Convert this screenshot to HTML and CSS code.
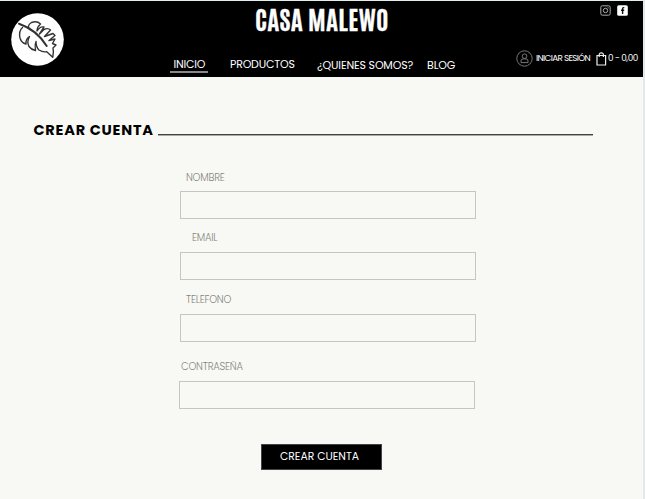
FILE: index.html
```
<!DOCTYPE html>
<html lang="es">
<head>
<meta charset="utf-8">
<title>Casa Malewo</title>
<link rel="stylesheet" href="styles.css">
</head>
<body>
<div class="page">
  <header class="header">
    <a class="logo">
      <svg width="53" height="53" viewBox="0 0 53 53" fill="none" stroke="#333" stroke-width="1.4" stroke-linejoin="round" stroke-linecap="round">
        <circle cx="26.5" cy="26.5" r="26.3" fill="#fff" stroke="none"/>
        <path d="M8 10.700Q26 17 35.700 33" stroke-width="2"/>
        <path d="M11.500 14.500Q7.500 18 9 25Q10.500 30 15 31Q14.500 26 18.500 23.500Q15.500 29 18 33.500Q20 36.500 24.500 37.500Q23.500 32 25 28.500Q25 34 28 37Q32 39.500 35.700 38.700L41.700 44.300Q43 39 42 35L45 32L41.500 30.500L44 26L38 27.500L44 22.500L42 20.500L33.500 23.500L39.500 17Q37 14.500 33 16.500L28.500 21L33 14Q29 13 26 18Q26 14 29.500 11Q26 7.500 20.500 9.500Q17 11.500 17.500 15"/>
      </svg>
    </a>
    <div class="center">
      <h1 class="brand"><span>CASA MALEWO</span></h1>
      <nav class="nav">
        <a class="inicio active">INICIO</a>
        <a class="productos">PRODUCTOS</a>
        <a class="quienes">¿QUIENES SOMOS?</a>
        <a class="blog">BLOG</a>
      </nav>
    </div>
    <div class="tools">
      <div class="social">
        <svg width="11" height="11" viewBox="0 0 11 11" fill="none" stroke="#aaa"><rect x=".8" y=".8" width="9.4" height="9.4" rx="1.6"/><circle cx="5.5" cy="5.5" r="2.2"/><path d="M7.6 2.9h1"/></svg>
        <svg width="11" height="11" viewBox="0 0 11 11"><rect x=".2" y=".2" width="10.6" height="10.6" rx="1.6" fill="#fff"/><path d="M7.3 2.6H6.5Q5.6 2.6 5.6 3.5V9M4 5.3H7.2" fill="none" stroke="#111" stroke-width="1.4"/></svg>
      </div>
      <div class="account">
        <svg width="17" height="17" viewBox="0 0 17 17" fill="none" stroke="#777"><circle cx="8.5" cy="8.5" r="7.7"/><circle cx="8.5" cy="6.2" r="2.3"/><path d="M5 12.6V11Q5 8.9 7 8.9H10Q12 8.9 12 11V12.6Z"/></svg>
        <a class="login">INICIAR SESIÓN</a>
        <svg class="bag" width="11" height="14" viewBox="0 0 11 14" fill="none" stroke="#eee" stroke-width="1.2"><path d="M1 3.500H9.600V13H1Z"/><path d="M3.200 5V3Q3.200 .8 5.300 .8T7.400 3V5"/></svg>
        <span class="total">0 - 0,00</span>
      </div>
    </div>
  </header>
  <main class="main">
    <div class="heading"><h2>CREAR CUENTA</h2><span class="rule"></span></div>
    <form class="form">
      <label class="nombre"><span>NOMBRE</span><input type="text"></label>
      <label class="email"><span>EMAIL</span><input type="text"></label>
      <label class="telefono"><span>TELEFONO</span><input type="text"></label>
      <label class="contrasena"><span>CONTRASEÑA</span><input type="text"></label>
      <button type="button">CREAR CUENTA</button>
    </form>
  </main>
</div>
</body>
</html>
```
FILE: styles.css
```
* { box-sizing: border-box; }
body { margin: 0; background: #f8f9f4; font-family: Poppins, Inter, "Liberation Sans", sans-serif; }
.page { height: 499px; overflow: hidden; border-top: 1px solid #e4f0f0; border-right: 2px solid #e3e8eb; }
.header { display: flex; height: 76px; background: #000; color: #fff; white-space: nowrap; }
.logo { width: 53px; margin: 12px 0 0 11px; }
.logo svg { display: block; }
.center { width: 292px; margin-left: 106px; }
.brand { display: flex; justify-content: center; width: 134px; height: 40px; margin: 0 0 0 85px; font: 700 25.5px/36px Antonio, "Bebas Neue", Oswald, Roboto, sans-serif; letter-spacing: .5px; -webkit-text-stroke: .4px #fff; }
.nav { display: flex; align-items: flex-start; margin-top: 16px; font-size: 11px; line-height: 14px; letter-spacing: -.2px; }
.nav a { flex: none; }
.inicio { width: 38px; height: 16px; padding-left: 3.4px; border-bottom: 2px solid #888; }
.productos { width: 87px; margin-left: 22px; }
.quienes { width: 110px; padding-top: 1px; letter-spacing: -.15px; }
.blog { padding-top: 1px; letter-spacing: -.1px; }
.tools { margin-left: 54px; }
.social { display: flex; gap: 6px; margin: 4px 0 0 84px; }
.account { display: flex; align-items: center; height: 17px; margin-top: 34px; font-size: 8.8px; }
.login { width: 60px; margin-left: 3px; letter-spacing: -.65px; }
.total { margin-left: 1px; letter-spacing: -.45px; }
.main { padding: 42px 0 0 33px; }
.heading { display: flex; height: 21px; }
h2 { width: 125px; margin: 0; padding-left: .5px; font-size: 14.5px; font-weight: 700; line-height: 22px; white-space: nowrap; letter-spacing: .78px; }
.rule { width: 435px; height: 2px; margin-top: 15px; border-top: 1px solid #444; border-bottom: 1px solid #aaa; }
.form { display: flex; flex-direction: column; align-items: flex-start; margin: 31px 0 0 147px; }
label { color: #858582; font-size: 10px; font-weight: 300; line-height: 14px; letter-spacing: -.25px; }
label span { display: block; height: 14px; }
input { display: block; width: 296px; height: 28px; padding: 0 6px; border: 1px solid #c5c6c2; background: transparent; border-radius: 0; outline: 0; }
.nombre span { padding-left: 6px; }
.nombre input { margin-top: 6px; }
.email { margin-top: 12px; }
.email span { padding-left: 12px; }
.email input { margin-top: 7px; }
.telefono { margin-top: 13px; }
.telefono span { padding-left: 6px; }
.telefono input { margin-top: 7px; }
.contrasena { margin-top: 18px; }
.contrasena span { padding-left: 1px; }
.contrasena input { margin-top: 7px; margin-left: -1px; }
button { width: 121px; height: 26px; margin: 35px 0 0 81px; padding: 0 4px 0 0; border: 1px solid #444; background: #000; color: #fff; font: 400 10.8px/24px Poppins, Inter, sans-serif; }
```
